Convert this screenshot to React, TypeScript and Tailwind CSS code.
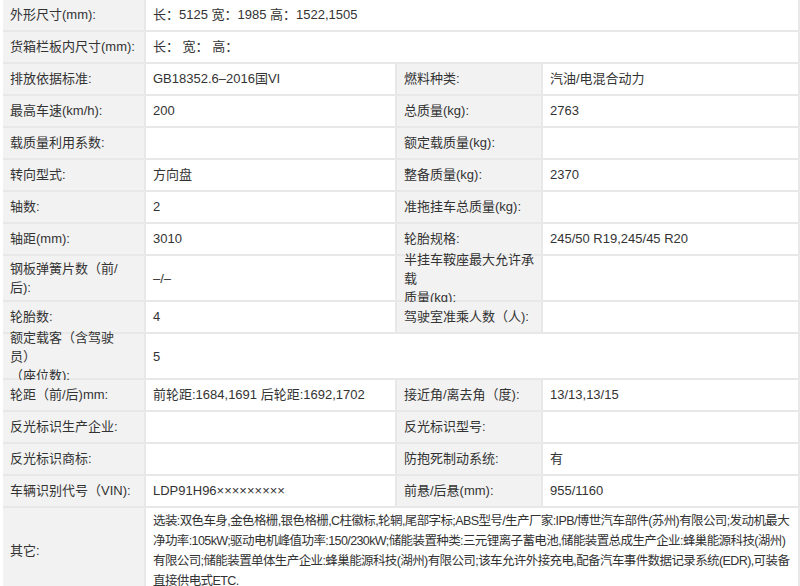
const rows: [string, string, string?, string?][] = [
  ["外形尺寸(mm):", "长：5125 宽：1985 高：1522,1505"],
  ["货箱栏板内尺寸(mm):", "长：  宽：  高："],
  ["排放依据标准:", "GB18352.6–2016国VI", "燃料种类:", "汽油/电混合动力"],
  ["最高车速(km/h):", "200", "总质量(kg):", "2763"],
  ["载质量利用系数:", "", "额定载质量(kg):", ""],
  ["转向型式:", "方向盘", "整备质量(kg):", "2370"],
  ["轴数:", "2", "准拖挂车总质量(kg):", ""],
  ["轴距(mm):", "3010", "轮胎规格:", "245/50 R19,245/45 R20"],
  ["钢板弹簧片数（前/后):", "–/–", "半挂车鞍座最大允许承载\n质量(kg):", ""],
  ["轮胎数:", "4", "驾驶室准乘人数（人):", ""],
  ["额定载客（含驾驶员）\n（座位数):", "5"],
  ["轮距（前/后)mm:", "前轮距:1684,1691 后轮距:1692,1702", "接近角/离去角（度):", "13/13,13/15"],
  ["反光标识生产企业:", "", "反光标识型号:", ""],
  ["反光标识商标:", "", "防抱死制动系统:", "有"],
  ["车辆识别代号（VIN):", "LDP91H96×××××××××", "前悬/后悬(mm):", "955/1160"],
  [
    "其它:",
    "选装:双色车身,金色格栅,银色格栅,C柱徽标,轮辋,尾部字标;ABS型号/生产厂家:IPB/博世汽车部件(苏州)有限公司;发动机最大净功率:105kW;驱动电机峰值功率:150/230kW;储能装置种类:三元锂离子蓄电池,储能装置总成生产企业:蜂巢能源科技(湖州)有限公司;储能装置单体生产企业:蜂巢能源科技(湖州)有限公司;该车允许外接充电,配备汽车事件数据记录系统(EDR),可装备直接供电式ETC.",
  ],
];

const label = "bg-[#f2f2f2] px-[7px] flex items-center whitespace-pre-line border-b-2 border-r-2 border-[#e8e8e8]";
const value = "bg-white px-[7px] flex items-center border-b-2 border-r-2 border-[#e8e8e8]";

export default function App() {
  return (
    <div
      className="w-[800px] h-[586px] overflow-hidden bg-white pl-[3px] text-[13px] text-[#333]"
      style={{ fontFamily: '"Liberation Sans", "Noto Sans CJK SC", sans-serif' }}
    >
      <div className="grid grid-cols-[143px_251px_146px_257px]">
        {rows.map(([a, b, c, d], i) => {
          const full = c === undefined;
          const last = i === rows.length - 1;
          const two = a.includes("\n") || (c ?? "").includes("\n");
          const h = last
            ? "min-h-[82px] py-[3px] leading-[20px]"
            : two
            ? "h-[46px] leading-[19px]"
            : "h-[32px] whitespace-nowrap";
          return full ? (
            <div key={i} className="contents">
              <div className={`${label} ${h}`}>{a}</div>
              <div className={`${value} ${h} col-span-3 ${last ? "text-[12.5px] tracking-[-0.6px]" : ""}`}>{b}</div>
            </div>
          ) : (
            <div key={i} className="contents">
              <div className={`${label} ${h}`}>{a}</div>
              <div className={`${value} ${h}`}>{b}</div>
              <div className={`${label} ${h}`}>{c}</div>
              <div className={`${value} ${h}`}>{d}</div>
            </div>
          );
        })}
      </div>
    </div>
  );
}
